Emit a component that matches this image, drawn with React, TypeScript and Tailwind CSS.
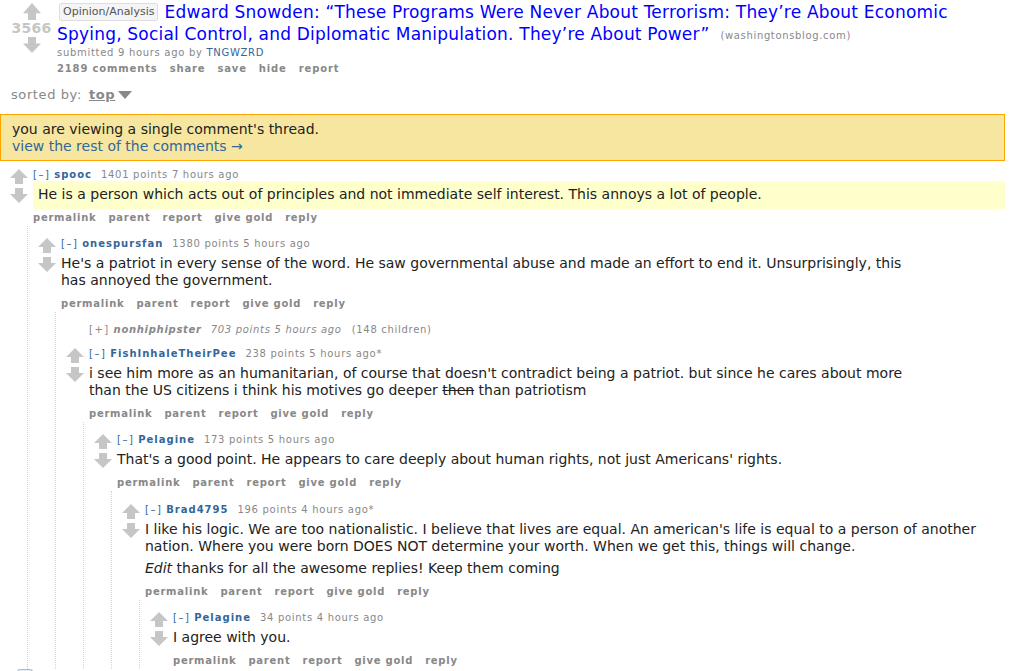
import React from "react";

const FONT = { fontFamily: '"DejaVu Sans", Verdana, sans-serif' };

function Up({ w = 18, h = 15 }: { w?: number; h?: number }) {
  return (
    <svg width={w} height={h} viewBox="0 0 18 15" preserveAspectRatio="none" className="block">
      <polygon points="9,0 18,9 13,9 13,15 5,15 5,9 0,9" fill="#c6c6c6" />
    </svg>
  );
}
function Down({ w = 18, h = 15 }: { w?: number; h?: number }) {
  return (
    <svg width={w} height={h} viewBox="0 0 18 15" preserveAspectRatio="none" className="block">
      <polygon points="5,0 13,0 13,6 18,6 9,15 0,6 5,6" fill="#c6c6c6" />
    </svg>
  );
}

function Buttons() {
  return (
    <div className="flex gap-[12px] text-[10px] font-bold text-[#888] leading-[17px] tracking-[0.75px]">
      <span>permalink</span>
      <span>parent</span>
      <span>report</span>
      <span>give gold</span>
      <span>reply</span>
    </div>
  );
}

type C = {
  author: string;
  points: string;
  time: string;
  edited?: boolean;
  highlight?: boolean;
  extraTop?: boolean;
  body: React.ReactNode;
  children?: React.ReactNode;
};

function Comment({ author, points, time, edited, highlight, extraTop, body, children }: C) {
  return (
    <div className={"ml-[10px] " + (extraTop ? "pt-[12px]" : "pt-[11px]")}>
      <div className="flex">
        <div className="w-[23px] shrink-0 flex flex-col pt-[1px] gap-[4px]">
          <Up />
          <Down />
        </div>
        <div className="flex-1">
          <div className="text-[10px] leading-[13px] text-[#888] whitespace-nowrap tracking-[0.7px]">
            <span className="text-[#369] tracking-[1.5px]">[–]</span>{" "}
            <span className="text-[#369] font-bold tracking-[1px]">{author}</span>
            <span className="ml-[9px]">{points} points {time} ago{edited ? "*" : ""}</span>
          </div>
          <div
            className={
              "text-[14px] leading-[17px] text-[#222] pt-[5px] pb-[6px] " +
              (highlight ? "bg-[#ffffcc] px-[5px] mr-[4px]" : "")
            }
          >
            {body}
          </div>
          <Buttons />
        </div>
      </div>
      {children ? (
        <div className="ml-[17px] border-l border-dotted border-[#ccccff]">{children}</div>
      ) : null}
    </div>
  );
}

export default function App() {
  return (
    <div className="bg-white w-[1009px] h-[671px] overflow-hidden text-[#222]" style={FONT}>
      {/* Post */}
      <div className="flex pt-[1px]">
        <div className="ml-[6px] w-[51px] shrink-0 flex flex-col items-center pt-[2px]">
          <Up w={18} h={17} />
          <div className="text-[14px] font-bold text-[#c6c6c6] leading-[17px] tracking-[0.3px]">3566</div>
          <Down w={18} h={16} />
        </div>
        <div className="flex-1">
          <div className="h-[22px] flex items-center whitespace-nowrap text-[17px] leading-[22px] text-[#0000ff] tracking-[0.2px]">
            <span className="inline-block text-[11px] leading-[16px] tracking-[0px] text-[#545454] bg-[#f5f5f5] border border-[#dedede] rounded-[2px] px-[3px] mr-[6px] ml-[2px]">
              Opinion/Analysis
            </span>
            <span>Edward Snowden: “These Programs Were Never About Terrorism: They’re About Economic</span>
          </div>
          <div className="h-[22px] flex items-center whitespace-nowrap text-[17px] leading-[22px] text-[#0000ff] tracking-[0.2px]">
            <span>Spying, Social Control, and Diplomatic Manipulation. They’re About Power”</span>
            <span className="text-[10px] text-[#888] ml-[11px] tracking-[0.65px] mt-[4px]">(washingtonsblog.com)</span>
          </div>
          <div className="mt-[1px] text-[10px] leading-[14px] text-[#888] tracking-[0.7px]">
            submitted 9 hours ago by <span className="text-[#369]">TNGWZRD</span>
          </div>
          <div className="flex gap-[12px] text-[10px] font-bold text-[#888] leading-[17px] tracking-[0.85px]">
            <span>2189 comments</span>
            <span>share</span>
            <span>save</span>
            <span>hide</span>
            <span>report</span>
          </div>
        </div>
      </div>

      {/* sorted by */}
      <div className="ml-[11px] mt-[9px] h-[18px] text-[13px] leading-[18px] text-[#888] flex items-center tracking-[0.6px]">
        <span>sorted by:</span>
        <span className="font-bold underline ml-[7px]">top</span>
        <svg width="14" height="8" viewBox="0 0 14 8" className="ml-[3px]">
          <polygon points="0,0 14,0 7,8" fill="#888" />
        </svg>
      </div>

      {/* info bar */}
      <div className="mt-[10px] mr-[4px] bg-[#f6e69f] border border-[#ffa500] px-[11px] pt-[6px] pb-[5px] text-[14px] leading-[17px]">
        <div className="text-[#222]">you are viewing a single comment's thread.</div>
        <div className="text-[#369]">view the rest of the comments →</div>
      </div>

      {/* thread */}
      <div className="-mt-[4px]">
        <Comment
          author="spooc"
          points="1401"
          time="7 hours"
          highlight
          body="He is a person which acts out of principles and not immediate self interest. This annoys a lot of people."
        >
          <Comment
            author="onespursfan"
            points="1380"
            time="5 hours"
            body={
              <>
                He's a patriot in every sense of the word. He saw governmental abuse and made an effort to end it. Unsurprisingly, this
                <br />
                has annoyed the government.
              </>
            }
          >
            <div className="ml-[10px] pt-[11px]">
              <div className="pl-[23px] text-[10px] leading-[13px] text-[#888] whitespace-nowrap tracking-[0.7px]">
                <span className="tracking-[1.5px]">[+]</span>{" "}
                <span className="italic font-bold">nonhiphipster</span>
                <span className="italic ml-[9px]">703 points 5 hours ago</span>
                <span className="ml-[10px]">(148 children)</span>
              </div>
            </div>
            <Comment
              author="FishInhaleTheirPee"
              points="238"
              time="5 hours"
              edited
              body={
                <>
                  i see him more as an humanitarian, of course that doesn't contradict being a patriot. but since he cares about more
                  <br />
                  than the US citizens i think his motives go deeper <span className="line-through">then</span> than patriotism
                </>
              }
            >
              <Comment
                author="Pelagine"
                points="173"
                time="5 hours"
                body="That's a good point. He appears to care deeply about human rights, not just Americans' rights."
              >
                <Comment
                  author="Brad4795"
                  points="196"
                  time="4 hours"
                  edited
                  extraTop
                  body={
                    <>
                      <div>
                        I like his logic. We are too nationalistic. I believe that lives are equal. An american's life is equal to a person of another
                        <br />
                        nation. Where you were born DOES NOT determine your worth. When we get this, things will change.
                      </div>
                      <div className="mt-[5px]">
                        <em>Edit</em> thanks for all the awesome replies! Keep them coming
                      </div>
                    </>
                  }
                >
                  <Comment author="Pelagine" points="34" time="4 hours" body="I agree with you." />
                </Comment>
              </Comment>
            </Comment>
          </Comment>
        </Comment>
        <div className="ml-[17px] mt-[0px] w-[16px] h-[6px] rounded-t-[3px] border border-b-0 border-[#9fbfdf] bg-[#e4eefa]" />
      </div>
    </div>
  );
}
